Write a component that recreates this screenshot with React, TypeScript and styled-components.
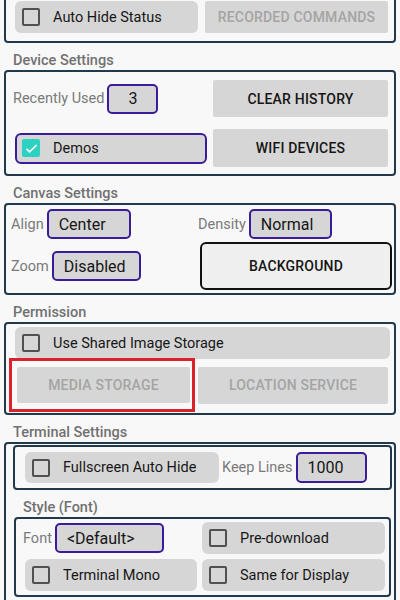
import React from 'react';
import styled, { createGlobalStyle } from 'styled-components';

// 設定画面のスクリーンショット再現
const GlobalStyle = createGlobalStyle`
  body {
    margin: 0;
    background: #f8f8f8;
    font-family: Roboto, "Liberation Sans", sans-serif;
    overflow: hidden;
  }
`;

const Page = styled.div`
  padding: 0 4px;
  width: 400px;
  height: 600px;
  box-sizing: border-box;
  overflow: hidden;
`;

const Panel = styled.div`
  border: 2px solid #203a4c;
  border-radius: 4px;
`;

const TopPanel = styled(Panel)`
  margin-top: -10px;
  display: grid;
  grid-template-columns: 1fr 1fr;
  column-gap: 7px;
  padding: 9px 6px 8px 9px;
`;

const SectionLabel = styled.div<{ $indent?: number }>`
  padding: 9px 0 0 ${(p) => p.$indent ?? 9}px;
  height: 27px;
  box-sizing: border-box;
  line-height: 18px;
  font-size: 14.5px;
  font-weight: 500;
  color: #717171;
`;

const DeviceGrid = styled(Panel)`
  display: grid;
  grid-template-columns: 1fr 175px;
  column-gap: 6px;
  row-gap: 12px;
  align-items: center;
  padding: 8px 6px 7px 9px;
`;

const CanvasGrid = styled(Panel)`
  display: grid;
  grid-template-columns: 1fr 192px;
  column-gap: 3px;
  row-gap: 3px;
  align-items: center;
  padding: 4px 2px 3px 7px;
`;

const PermissionPanel = styled(Panel)`
  padding: 3px 4px 1px 3px;
`;

const ButtonRow = styled.div`
  display: flex;
  align-items: center;
  gap: 3px;
  margin-top: -1px;
`;

// 赤枠のハイライト（注釈）
const Highlight = styled.div`
  width: 186px;
  box-sizing: border-box;
  border: 3px solid #d8222c;
  padding: 6px 2px 6px 5px;
`;

const TerminalPanel = styled(Panel)`
  padding: 1px 2px 12px 7px;
`;

const InnerRow = styled(Panel)`
  display: flex;
  align-items: center;
  gap: 3px;
  padding: 5px 0 5px 10px;
`;

const StyleGrid = styled(Panel)`
  margin: 0 1px;
  display: grid;
  grid-template-columns: 172px 1fr;
  column-gap: 5px;
  row-gap: 5px;
  align-items: center;
  padding: 3px 4px 4px 9px;
`;

const Field = styled.div<{ $shift?: number }>`
  display: flex;
  align-items: center;
  gap: 3px;
  margin-left: ${(p) => p.$shift ?? -2}px;
`;

const FieldLabel = styled.span`
  font-size: 14.5px;
  color: #7a7a7a;
  white-space: nowrap;
`;

const Spinner = styled.div<{ $width: number; $height?: number; $center?: boolean }>`
  width: ${(p) => p.$width}px;
  height: ${(p) => p.$height ?? 30}px;
  box-sizing: border-box;
  border: 2px solid #3a1c98;
  border-radius: 5px;
  background: #d6d6d6;
  display: flex;
  align-items: center;
  justify-content: ${(p) => (p.$center ? 'center' : 'flex-start')};
  padding-left: ${(p) => (p.$center ? 0 : 10)}px;
  font-size: 16px;
  color: #161616;
  white-space: nowrap;
`;

const Button = styled.div<{ $height: number; $width?: number; $disabled?: boolean; $outlined?: boolean }>`
  height: ${(p) => p.$height}px;
  width: ${(p) => (p.$width ? `${p.$width}px` : 'auto')};
  flex: none;
  box-sizing: border-box;
  display: flex;
  align-items: center;
  justify-content: center;
  background: ${(p) => (p.$outlined ? '#efefef' : '#d6d6d6')};
  border: ${(p) => (p.$outlined ? '2px solid #111' : 'none')};
  border-radius: ${(p) => (p.$outlined ? 6 : 2)}px;
  font-size: 14px;
  font-weight: 500;
  letter-spacing: 0.2px;
  text-transform: uppercase;
  color: ${(p) => (p.$disabled ? '#a4a4a4' : '#151515')};
  white-space: nowrap;
`;

const CheckRow = styled.div<{ $height?: number; $width?: number; $active?: boolean; $inset?: number }>`
  height: ${(p) => p.$height ?? 32}px;
  width: ${(p) => (p.$width ? `${p.$width}px` : 'auto')};
  flex: none;
  box-sizing: border-box;
  display: flex;
  align-items: center;
  gap: 13px;
  margin-left: ${(p) => p.$inset ?? 0}px;
  padding-left: ${(p) => (p.$active ? 5 : 7)}px;
  background: #d6d6d6;
  border: ${(p) => (p.$active ? '2px solid #3a1c98' : 'none')};
  border-radius: 6px;
  font-size: 14.5px;
  color: #161616;
  white-space: nowrap;
`;

const Box = styled.span<{ $checked?: boolean }>`
  width: 18px;
  height: 18px;
  box-sizing: border-box;
  flex: none;
  border-radius: 2px;
  border: ${(p) => (p.$checked ? 'none' : '2px solid #505050')};
  background: ${(p) => (p.$checked ? '#2bd2c2' : 'transparent')};
  display: flex;
  align-items: center;
  justify-content: center;
`;

interface CheckProps {
  label: string;
  checked?: boolean;
  active?: boolean;
  height?: number;
  width?: number;
  inset?: number;
}

const Check: React.FC<CheckProps> = ({ label, checked, active, height, width, inset }) => (
  <CheckRow $active={active} $height={height} $width={width} $inset={inset}>
    <Box $checked={checked}>
      {checked && (
        <svg width="15" height="15" viewBox="0 0 24 24">
          <path d="M4 12.5l5 5L20 6.5" fill="none" stroke="#fff" strokeWidth="2.6" />
        </svg>
      )}
    </Box>
    {label}
  </CheckRow>
);

export default function App() {
  return (
    <>
      <GlobalStyle />
      <Page>
        <TopPanel>
          <Check label="Auto Hide Status" />
          <Button $height={32} $disabled>
            Recorded Commands
          </Button>
        </TopPanel>

        <SectionLabel>Device Settings</SectionLabel>
        <DeviceGrid>
          <Field>
            <FieldLabel>Recently Used</FieldLabel>
            <Spinner $width={51} $center>
              3
            </Spinner>
          </Field>
          <Button $height={37}>Clear History</Button>
          <Check label="Demos" checked active height={31} />
          <Button $height={38}>WiFi Devices</Button>
        </DeviceGrid>

        <SectionLabel>Canvas Settings</SectionLabel>
        <CanvasGrid>
          <Field>
            <FieldLabel>Align</FieldLabel>
            <Spinner $width={84}>Center</Spinner>
          </Field>
          <Field>
            <FieldLabel>Density</FieldLabel>
            <Spinner $width={83}>Normal</Spinner>
          </Field>
          <Field>
            <FieldLabel>Zoom</FieldLabel>
            <Spinner $width={89}>Disabled</Spinner>
          </Field>
          <Button $height={48} $outlined>
            Background
          </Button>
        </CanvasGrid>

        <SectionLabel>Permission</SectionLabel>
        <PermissionPanel>
          <Check label="Use Shared Image Storage" inset={6} height={32} />
          <ButtonRow>
            <Highlight>
              <Button $height={36} $disabled>
                Media Storage
              </Button>
            </Highlight>
            <Button $height={37} $width={190} $disabled>
              Location Service
            </Button>
          </ButtonRow>
        </PermissionPanel>

        <SectionLabel>Terminal Settings</SectionLabel>
        <TerminalPanel>
          <InnerRow>
            <Check label="Fullscreen Auto Hide" height={31} width={194} />
            <Field $shift={0}>
              <FieldLabel>Keep Lines</FieldLabel>
              <Spinner $width={71} $height={31}>
                1000
              </Spinner>
            </Field>
          </InnerRow>
          <SectionLabel $indent={10}>Style (Font)</SectionLabel>
          <StyleGrid>
            <Field>
              <FieldLabel>Font</FieldLabel>
              <Spinner $width={109}>&lt;Default&gt;</Spinner>
            </Field>
            <Check label="Pre-download" height={32} />
            <Check label="Terminal Mono" height={32} />
            <Check label="Same for Display" height={32} />
          </StyleGrid>
        </TerminalPanel>
      </Page>
    </>
  );
}
